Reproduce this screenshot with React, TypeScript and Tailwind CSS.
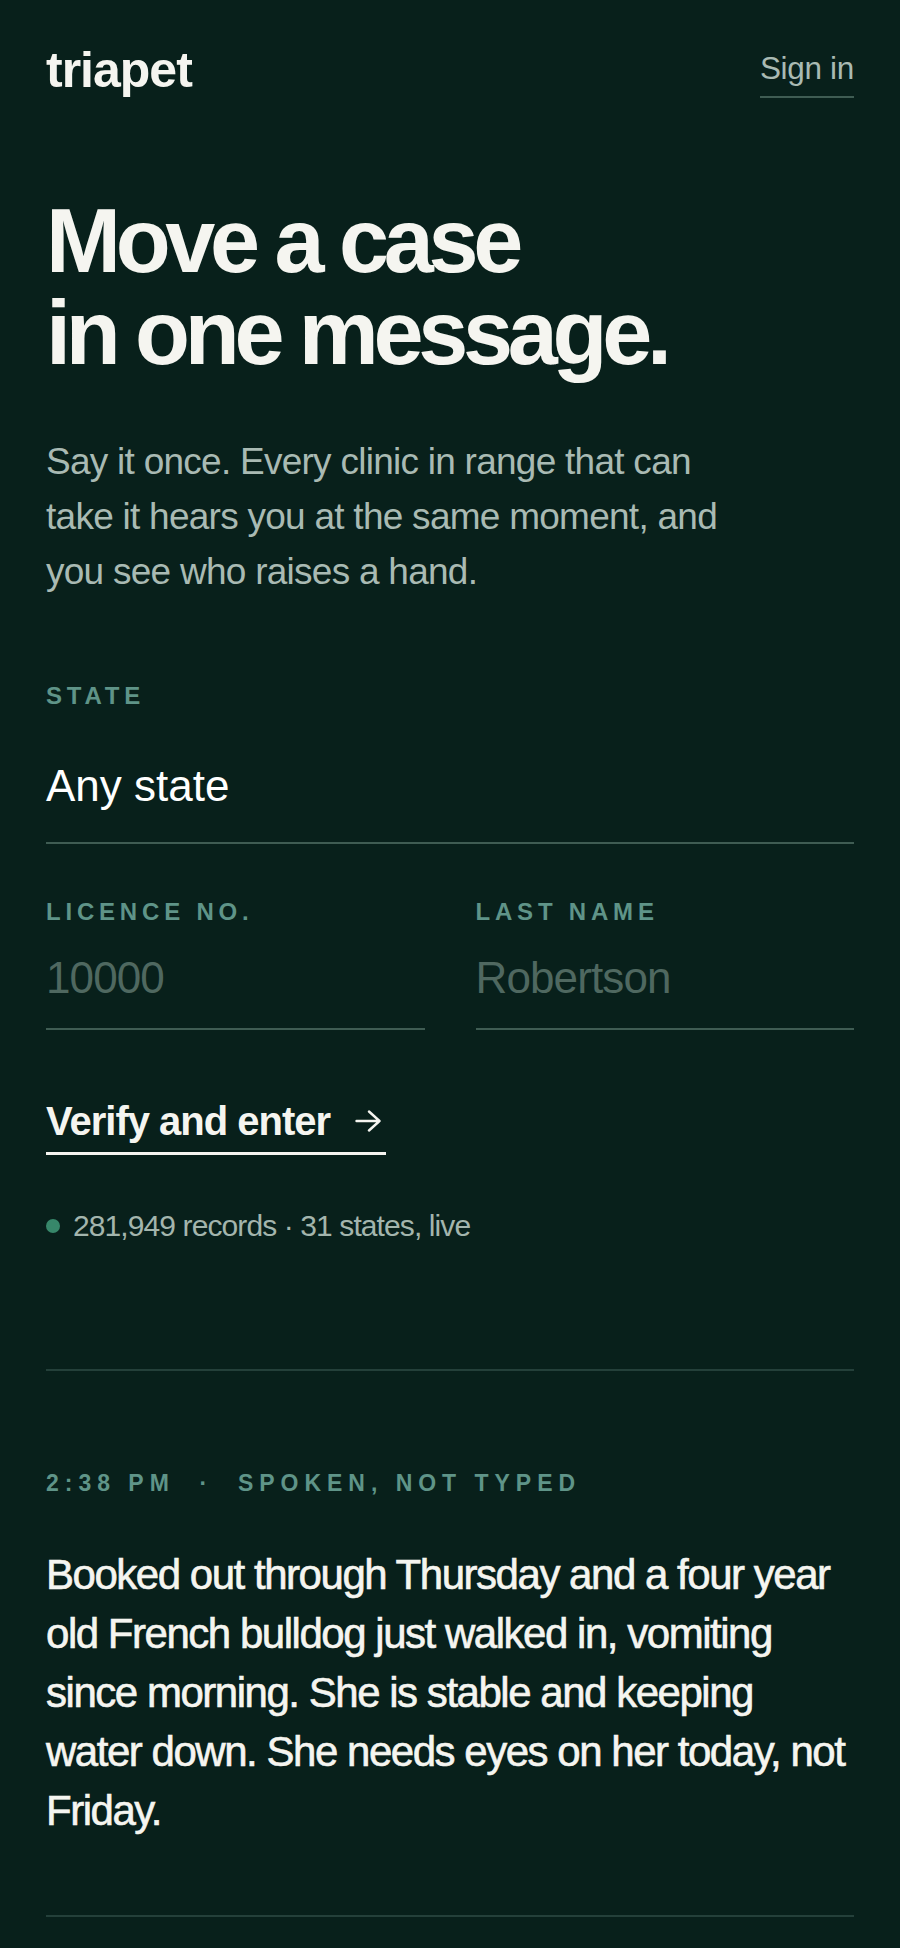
const font = { fontFamily: '"Liberation Sans", Arial, sans-serif' }

function Label({ children }: { children: React.ReactNode }) {
  return <div className="text-[24px] leading-[28px] font-bold tracking-[0.2em] text-[#5f9488]">{children}</div>
}

export default function App() {
  return (
    <div style={font} className="min-h-screen bg-[#08201b] text-[#f5f5f0] overflow-hidden">
      <div className="px-[46px]">

        {/* Header */}
        <div className="flex items-start justify-between pt-[44px]">
          <div className="text-[50px] leading-[52px] font-bold tracking-[-0.02em]">triapet</div>
          <div className="text-[31.5px] leading-[38px] mt-[5px] pb-[9px] border-b-2 border-[#3f5c53] text-[#a9bab3] tracking-[-0.01em]">Sign in</div>
        </div>

        {/* Hero */}
        <h1 className="mt-[97px] text-[90px] leading-[92px] font-bold tracking-[-0.059em]">
          Move a case<br />in one message.
        </h1>
        <p className="mt-[55px] text-[37px] leading-[55px] text-[#a9bab3] tracking-[-0.02em] max-w-[700px]">
          Say it once. Every clinic in range that can take it hears you at the same moment, and you see who raises a hand.
        </p>

        {/* Form */}
        <div className="mt-[83px]">
          <Label>STATE</Label>
          <div className="mt-[50px] pb-[30px] border-b-2 border-[#3f5c53] text-[44px] leading-[52px] text-white">Any state</div>
        </div>
        <div className="mt-[54px] grid grid-cols-2 gap-x-[51px]">
          <div>
            <Label>LICENCE NO.</Label>
            <div className="mt-[26px] pb-[24px] border-b-2 border-[#3f5c53] text-[44px] leading-[52px] text-[#4f6860] tracking-[-0.02em]">10000</div>
          </div>
          <div>
            <Label>LAST NAME</Label>
            <div className="mt-[26px] pb-[24px] border-b-2 border-[#3f5c53] text-[44px] leading-[52px] text-[#4f6860] tracking-[-0.02em]">Robertson</div>
          </div>
        </div>

        <div className="mt-[66px] inline-flex items-center gap-[25px] pb-[6px] border-b-[3px] border-[#f5f5f0] pr-[5px]">
          <span className="text-[40px] leading-[50px] font-bold tracking-[-0.025em]">Verify and enter</span>
          <svg width="26" height="22" viewBox="0 0 26 22" fill="none" stroke="currentColor" strokeWidth="2.4" strokeLinecap="round" strokeLinejoin="round">
            <path d="M1.5 11H24.5M14 1.5L24.5 11L14 20.5" />
          </svg>
        </div>

        <div className="mt-[53px] flex items-center gap-[13px]">
          <span className="w-[14px] h-[14px] rounded-full bg-[#37876a]"></span>
          <span className="text-[30px] leading-[36px] text-[#a3b5ad] tracking-[-0.03em]">281,949 records · 31 states, live</span>
        </div>

        {/* Message */}
        <div className="mt-[125px] border-t-2 border-[#24403a] pt-[98px]">
          <div className="text-[23px] leading-[28px] font-bold tracking-[0.26em] text-[#5f9488] whitespace-pre">2:38 PM  ·  SPOKEN, NOT TYPED</div>
          <p className="mt-[48px] text-[42px] leading-[59px] [-webkit-text-stroke:0.6px_currentColor] tracking-[-0.035em] text-[#f5f5f0]">
            Booked out through Thursday and a four year old French bulldog just walked in, vomiting since morning. She is stable and keeping water down. She needs eyes on her today, not Friday.
          </p>
        </div>
        <div className="mt-[75px] border-t-2 border-[#24403a]"></div>

      </div>
    </div>
  )
}
